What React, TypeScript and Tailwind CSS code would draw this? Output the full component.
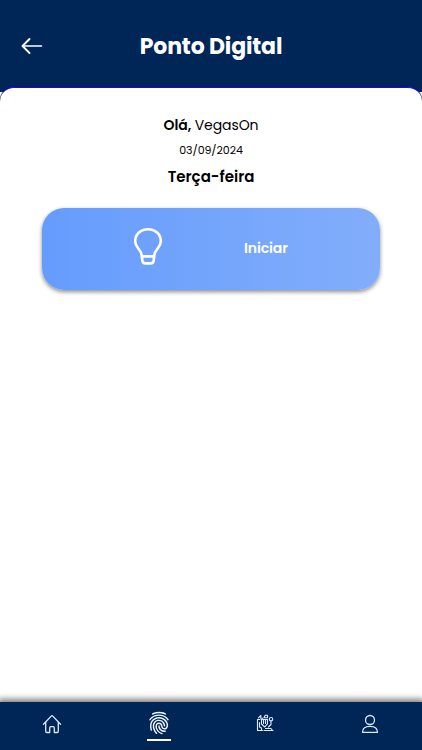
import type { ReactNode } from 'react';
import { IoFingerPrint } from 'react-icons/io5';

function BackArrow() {
  return (
    <svg className="h-[18px] w-[22px]" viewBox="0 0 22 18" fill="none" stroke="white" strokeLinecap="round" strokeLinejoin="round">
      <path d="M8.5 2 1.5 9l7 7" strokeWidth="1.9" />
      <path d="M2 9h18.5" strokeWidth="1.6" />
    </svg>
  );
}

function BulbIcon() {
  return (
    <svg className="h-[38px] w-[30px]" viewBox="0 0 30 38" fill="none" stroke="white" strokeWidth="2.6" strokeLinejoin="round">
      <path d="M8.8 29.4C8.6 25.6 7.6 23.9 5.2 21.3 3.2 19.1 2.2 17 2.2 14.2 2.2 7.1 7.9 2.3 15 2.3s12.8 4.8 12.8 11.9c0 2.8-1 4.9-3 7.1-2.4 2.6-3.4 4.3-3.6 8.1Z" />
      <path d="m8.8 29.4.5 4.1c.2 1.900 1.200 2.900 3 2.900h5.400c1.800 0 2.800-1 3-2.900l.5-4.100" />
    </svg>
  );
}

function HomeIcon() {
  return (
    <svg className="h-5 w-5" viewBox="0 0 20 20" fill="none" stroke="currentColor" strokeWidth="1.3" strokeLinecap="round" strokeLinejoin="round">
      <path d="M1.5 10.2 9.2 2.1q.8-.8 1.6 0l7.7 8.1" />
      <path d="M3.7 8.2v9.1q0 1.2 1.2 1.2h2.8v-4.600q0-1.200 1.200-1.200h2.200q1.200 0 1.200 1.200v4.600h2.800q1.200 0 1.200-1.200V8.200" />
    </svg>
  );
}

function DeskIcon() {
  return (
    <svg className="h-[18px] w-[18px]" viewBox="0 0 18 18" fill="none" stroke="currentColor" strokeWidth="1.1" strokeLinecap="round" strokeLinejoin="round">
      <path d="M4 5.5H1.5v11h5M2.5 3.800 4.800 1.500v2.700h2M8 3.800l1.200-2.500h2.300v2.500H8" />
      <path d="M5.500 5.500h6v4.300L8.800 13 5.500 10ZM7.500 5.500v4M9.500 5.500v4M3.500 8.500V13l2 1v2.500" />
      <circle cx="15" cy="5.2" r="1.7" />
      <path d="M15 7v3.500L12.500 13M8 16.500h9M9.500 14.500h5.500l1.500 2" />
    </svg>
  );
}

function UserIcon() {
  return (
    <svg className="h-5 w-5" viewBox="0 0 20 20" fill="none" stroke="currentColor" strokeWidth="1.3" strokeLinejoin="round">
      <circle cx="10" cy="6" r="4.5" />
      <path d="M2.500 18.300c0-3.900 3-5.900 7.500-5.900s7.500 2 7.500 5.900Z" />
    </svg>
  );
}

function NavItem({ children, label }: { children: ReactNode; label: string }) {
  return (
    <button aria-label={label} className="flex h-full justify-center pt-3 text-[#dce8ff]">
      {children}
    </button>
  );
}

export default function App() {
  return (
    <div className="flex h-[750px] w-[422px] flex-col overflow-hidden bg-white font-[Poppins,sans-serif] text-black">
      <header className="grid h-[92px] shrink-0 grid-cols-[64px_1fr_64px] items-center bg-[#002657]">
        <button aria-label="Voltar" className="pl-[21px]">
          <BackArrow />
        </button>
        <h1 className="pt-px text-center text-[22px] leading-8 font-bold tracking-[-0.15px] text-white">Ponto Digital</h1>
      </header>

      <main className="-mt-[5px] flex flex-1 flex-col items-center rounded-t-[14px] border-t border-[#1713b5] bg-white pt-[27px] shadow-[0_-1px_1px_rgba(18,10,170,0.7)]">
        <p className="text-sm leading-5 tracking-[-0.1px]">
          <strong className="font-semibold">Olá,</strong> VegasOn
        </p>
        <p className="mt-1.5 text-[11px] leading-[18px] tracking-[-0.05px]">03/09/2024</p>
        <h2 className="mt-1.5 text-[15px] leading-6 font-semibold">Terça-feira</h2>

        <button className="mt-[19px] flex h-[82px] w-[338px] items-center rounded-[22px] bg-linear-to-r from-[#659cfd] to-[#82adfb] pl-[91px] text-white shadow-[0_2px_4px_rgba(0,0,0,0.45)]">
          <span className="flex w-[111px] pb-1.5">
            <BulbIcon />
          </span>
          <span className="pb-0.5 text-[14px] leading-5 font-semibold tracking-[-0.1px]">Iniciar</span>
        </button>
      </main>

      <nav className="-ml-px grid h-12 w-[424px] shrink-0 grid-cols-[106px_108px_104px_106px] bg-[#002657] shadow-[0_-2px_6px_1px_rgba(0,0,0,0.5)]">
        <NavItem label="Início">
          <HomeIcon />
        </NavItem>
        <button aria-label="Ponto" className="flex h-full flex-col items-center pt-[9px] text-[#f0f5ff]">
          <IoFingerPrint className="h-6 w-6" />
          <span className="mt-1 h-[1.5px] w-6 bg-white" />
        </button>
        <NavItem label="Tarefas">
          <DeskIcon />
        </NavItem>
        <NavItem label="Perfil">
          <UserIcon />
        </NavItem>
      </nav>
    </div>
  );
}
